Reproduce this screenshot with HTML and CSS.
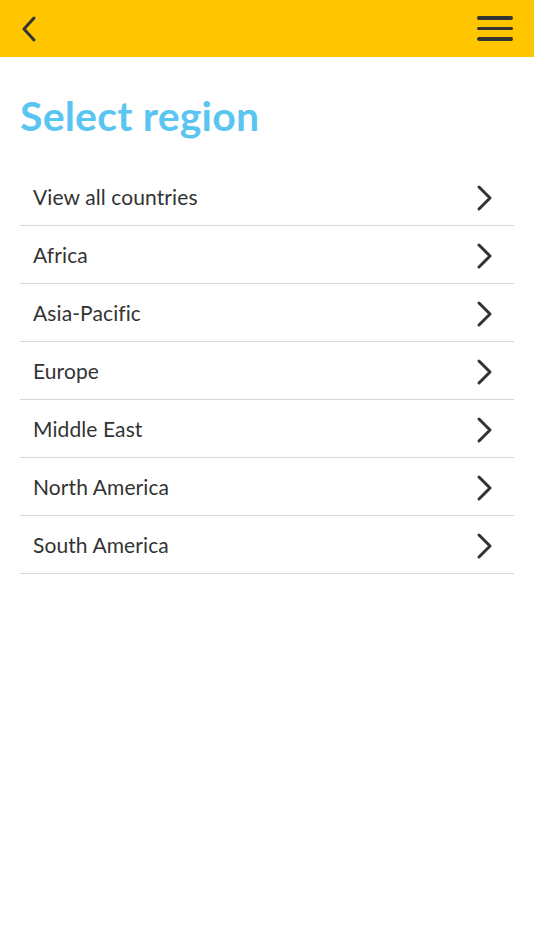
FILE: index.html
```html
<!DOCTYPE html>
<html>
<head>
<meta charset="utf-8">
<link rel="stylesheet" href="styles.css">
</head>
<body>
<header class="topbar">
  <button class="icon-btn back" aria-label="Back">
    <svg width="16" height="26" viewBox="0 0 16 26"><path d="M13 2 L3 13 L13 24" fill="none" stroke="#333" stroke-width="3" stroke-linecap="round" stroke-linejoin="round"/></svg>
  </button>
  <button class="icon-btn menu" aria-label="Menu">
    <span></span><span></span><span></span>
  </button>
</header>
<main class="content">
  <h1 class="title">Select region</h1>
  <ul class="list">
    <li class="row"><span>View all countries</span><svg class="chev" width="18" height="28" viewBox="0 0 18 28"><path d="M3 3 L14 14 L3 25" fill="none" stroke="#333" stroke-width="3" stroke-linecap="round" stroke-linejoin="round"/></svg></li>
    <li class="row"><span>Africa</span><svg class="chev" width="18" height="28" viewBox="0 0 18 28"><path d="M3 3 L14 14 L3 25" fill="none" stroke="#333" stroke-width="3" stroke-linecap="round" stroke-linejoin="round"/></svg></li>
    <li class="row"><span>Asia-Pacific</span><svg class="chev" width="18" height="28" viewBox="0 0 18 28"><path d="M3 3 L14 14 L3 25" fill="none" stroke="#333" stroke-width="3" stroke-linecap="round" stroke-linejoin="round"/></svg></li>
    <li class="row"><span>Europe</span><svg class="chev" width="18" height="28" viewBox="0 0 18 28"><path d="M3 3 L14 14 L3 25" fill="none" stroke="#333" stroke-width="3" stroke-linecap="round" stroke-linejoin="round"/></svg></li>
    <li class="row"><span>Middle East</span><svg class="chev" width="18" height="28" viewBox="0 0 18 28"><path d="M3 3 L14 14 L3 25" fill="none" stroke="#333" stroke-width="3" stroke-linecap="round" stroke-linejoin="round"/></svg></li>
    <li class="row"><span>North America</span><svg class="chev" width="18" height="28" viewBox="0 0 18 28"><path d="M3 3 L14 14 L3 25" fill="none" stroke="#333" stroke-width="3" stroke-linecap="round" stroke-linejoin="round"/></svg></li>
    <li class="row"><span>South America</span><svg class="chev" width="18" height="28" viewBox="0 0 18 28"><path d="M3 3 L14 14 L3 25" fill="none" stroke="#333" stroke-width="3" stroke-linecap="round" stroke-linejoin="round"/></svg></li>
  </ul>
</main>
</body>
</html>
```
FILE: styles.css
```css
* { box-sizing: border-box; }
html, body { margin: 0; padding: 0; background: #fff; }
body { font-family: Lato, "Open Sans", sans-serif; color: #333; }

.topbar {
  height: 57px;
  background: #ffc600;
  display: flex;
  align-items: center;
  justify-content: space-between;
  padding: 0 22px 0 21px;
}
.icon-btn {
  background: none;
  border: 0;
  padding: 0;
  display: flex;
  cursor: pointer;
}
.menu {
  flex-direction: column;
  gap: 7px;
  width: 36px;
  margin-right: -1px;
}
.menu span {
  display: block;
  height: 3.5px;
  background: #333;
  border-radius: 2px;
}

.content { padding: 0 20px; }
.title {
  margin: 36px 0 29px;
  font-size: 41px;
  line-height: 46px;
  font-weight: 700;
  color: #5bc5f2;
  letter-spacing: 0.2px;
}
.list { list-style: none; margin: 0; padding: 0; }
.row {
  height: 58px;
  border-bottom: 1.5px solid #d6d6d6;
  display: flex;
  align-items: center;
  justify-content: space-between;
  padding: 0 20px 0 13px;
  font-size: 21px;
  letter-spacing: 0.1px;
}
.chev { flex: none; margin-top: 2px; }
```
